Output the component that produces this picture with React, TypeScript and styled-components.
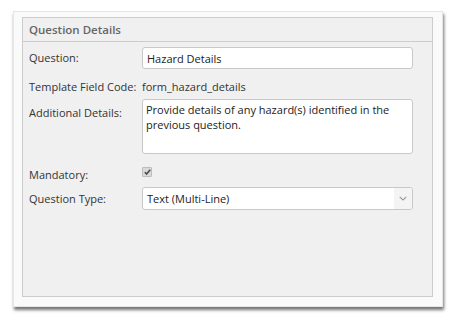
import React from "react";
import styled, { createGlobalStyle } from "styled-components";

const GlobalStyle = createGlobalStyle`
  html, body {
    margin: 0;
    padding: 0;
    background: #ffffff;
  }
  body {
    font-family: "Open Sans", "Liberation Sans", sans-serif;
  }
`;

const Page = styled.div`
  width: 455px;
  height: 322px;
  padding: 11px 0 0 13px;
  box-sizing: border-box;
`;

const Card = styled.div`
  width: 430px;
  height: 296px;
  box-sizing: border-box;
  background: #fafafa;
  border: 1px solid #e6e6e6;
  box-shadow: 1px 3px 3px rgba(0, 0, 0, 0.55);
  padding: 5px 9px 9px 8px;
  display: flex;
`;

const Panel = styled.section`
  flex: 1;
  background: #f0f0f0;
  border: 1px solid #cccccc;
  display: flex;
  flex-direction: column;
`;

const PanelHeader = styled.div`
  height: 23px;
  border-bottom: 1px solid #cccccc;
  display: flex;
  align-items: center;
  padding-left: 6px;
  font-size: 11.5px;
  font-weight: 600;
  color: #666666;
`;

const Body = styled.div`
  padding: 0 19px 0 6px;
  display: flex;
  flex-direction: column;
`;

const Row = styled.div<{ $top: number; $align?: string }>`
  display: grid;
  grid-template-columns: 113px 1fr;
  align-items: ${(p) => p.$align || "center"};
  margin-top: ${(p) => p.$top}px;
`;

const Label = styled.label<{ $offset?: number }>`
  font-size: 11px;
  color: #333333;
  line-height: 16px;
  padding-top: ${(p) => p.$offset || 0}px;
`;

const Value = styled.span`
  font-size: 11px;
  color: #333333;
  line-height: 17px;
`;

const TextInput = styled.input`
  height: 22px;
  box-sizing: border-box;
  border: 1px solid #c8c8c8;
  border-radius: 3px;
  background: #ffffff;
  padding: 0 4px;
  font-family: inherit;
  font-size: 11px;
  color: #222222;
  outline: none;
`;

const TextArea = styled.textarea`
  height: 55px;
  box-sizing: border-box;
  border: 1px solid #c8c8c8;
  border-radius: 3px;
  background: #ffffff;
  padding: 2px 3px;
  font-family: inherit;
  font-size: 11px;
  line-height: 15px;
  color: #222222;
  resize: none;
  overflow: hidden;
  outline: none;
  margin: 0;
`;

const CheckBox = styled.span`
  width: 8px;
  height: 8px;
  margin-top: 3px;
  background: #d9d9d9;
  border: 1px solid #bdbdbd;
  border-radius: 1px;
  display: flex;
  align-items: center;
  justify-content: center;
`;

const Select = styled.div`
  height: 23px;
  box-sizing: border-box;
  border: 1px solid #c8c8c8;
  border-radius: 3px;
  background: #ffffff;
  display: flex;
  align-items: stretch;
  overflow: hidden;
`;

const SelectText = styled.span`
  flex: 1;
  display: flex;
  align-items: center;
  padding-left: 4px;
  font-size: 11px;
  color: #222222;
`;

const SelectArrow = styled.span`
  width: 18px;
  background: #f4f4f4;
  display: flex;
  align-items: center;
  justify-content: center;
`;

export default function App() {
  return (
    <>
      <GlobalStyle />
      <Page>
        <Card>
          <Panel>
            <PanelHeader>Question Details</PanelHeader>
            <Body>
              <Row $top={5}>
                <Label>Question:</Label>
                <TextInput defaultValue="Hazard Details" />
              </Row>
              <Row $top={9}>
                <Label>Template Field Code:</Label>
                <Value>form_hazard_details</Value>
              </Row>
              <Row $top={4} $align="start">
                <Label $offset={6}>Additional Details:</Label>
                <TextArea
                  readOnly
                  defaultValue="Provide details of any hazard(s) identified in the previous question."
                />
              </Row>
              <Row $top={10} $align="start">
                <Label $offset={3}>Mandatory:</Label>
                <CheckBox>
                  <svg width="7" height="6" viewBox="0 0 7 6">
                    <path d="M0.8 3.2 L2.6 5 L6.2 0.8" fill="none" stroke="#444" strokeWidth="1.5" />
                  </svg>
                </CheckBox>
              </Row>
              <Row $top={4}>
                <Label>Question Type:</Label>
                <Select>
                  <SelectText>Text (Multi-Line)</SelectText>
                  <SelectArrow>
                    <svg width="8" height="5" viewBox="0 0 8 5">
                      <path d="M0.7 0.8 L4 4 L7.3 0.8" fill="none" stroke="#999" strokeWidth="1.1" />
                    </svg>
                  </SelectArrow>
                </Select>
              </Row>
            </Body>
          </Panel>
        </Card>
      </Page>
    </>
  );
}
